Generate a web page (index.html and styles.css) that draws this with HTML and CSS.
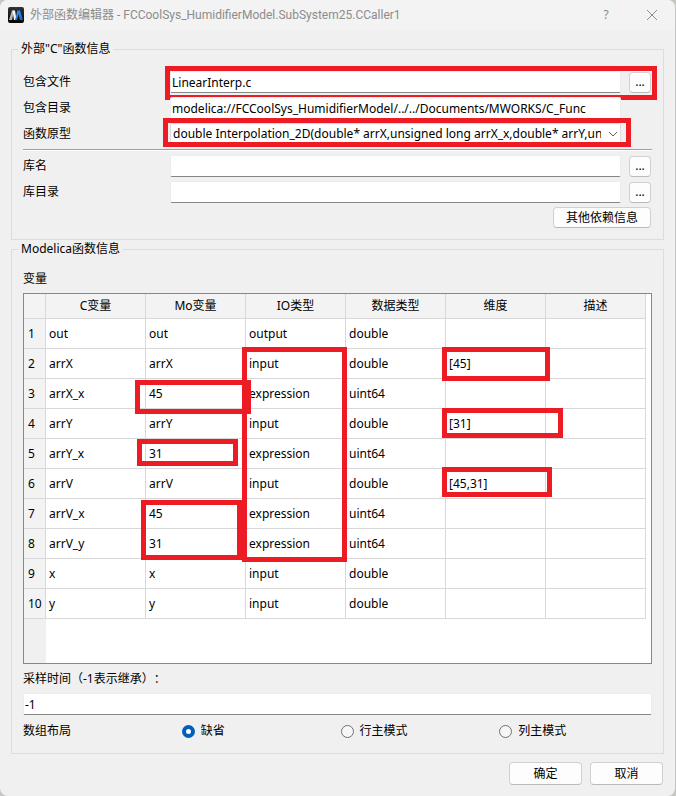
FILE: index.html
```html
<!DOCTYPE html>
<html lang="zh-CN">
<head>
<meta charset="utf-8">
<meta name="viewport" content="width=device-width, initial-scale=1">
<title>外部函数编辑器</title>
<link rel="stylesheet" href="styles.css">
</head>
<body>
<div class="window">
  <header class="titlebar">
    <svg class="logo" viewBox="0 0 16 16" aria-hidden="true">
      <defs>
        <linearGradient id="logo-bg" x1="0" y1="0" x2="0" y2="1"><stop offset="0" stop-color="#333"/><stop offset="1" stop-color="#050505"/></linearGradient>
        <linearGradient id="logo-blue" x1="0" y1="0" x2="1" y2="1"><stop offset="0" stop-color="#3aa0ff"/><stop offset="1" stop-color="#0b62c4"/></linearGradient>
      </defs>
      <rect width="16" height="16" rx="2" fill="url(#logo-bg)"/>
      <path d="M1 13 4 3.500h2L4 13z" fill="#b4b8be"/>
      <path d="M4.500 3.500H7L8.500 13H6z" fill="#f4f6f8"/>
      <path d="M7 13 9.500 3.500H12L15 13h-3L10.500 7 9 13z" fill="url(#logo-blue)"/>
    </svg>
    <h1 class="title">外部函数编辑器 - FCCoolSys_HumidifierModel.SubSystem25.CCaller1</h1>
    <button class="caption-button" type="button" aria-label="帮助">?</button>
    <button class="caption-button" type="button" aria-label="关闭"><svg class="close-icon" viewBox="0 0 12 12" aria-hidden="true"><path d="M1 1l10 10M11 1L1 11"/></svg></button>
  </header>

  <form class="content">
    <fieldset class="group">
      <legend>外部"C"函数信息</legend>
      <div class="fields">
        <div class="field">
          <label for="file">包含文件</label>
          <input id="file" class="textbox" type="text" value="LinearInterp.c">
          <button class="button browse" type="button" aria-label="浏览包含文件">...</button>
          <span class="mark mark-file"></span>
        </div>
        <div class="field">
          <label for="dir">包含目录</label>
          <input id="dir" class="textbox" type="text" value="modelica://FCCoolSys_HumidifierModel/../../Documents/MWORKS/C_Func">
        </div>
        <div class="field">
          <label for="proto">函数原型</label>
          <div class="combo">
            <select id="proto"><option>double Interpolation_2D(double* arrX,unsigned long arrX_x,double* arrY,unsigned long arrY_x,double* arrV,unsigned long arrV_x,unsigned long arrV_y,double x,double y)</option></select>
            <svg class="chevron" viewBox="0 0 10 6" aria-hidden="true"><path d="M1 1l4 4 4-4"/></svg>
            <span class="mark mark-proto"></span>
          </div>
        </div>
        <hr class="separator">
        <div class="field">
          <label for="lib">库名</label>
          <input id="lib" class="textbox" type="text">
          <button class="button browse" type="button" aria-label="浏览库名">...</button>
        </div>
        <div class="field">
          <label for="libdir">库目录</label>
          <input id="libdir" class="textbox" type="text">
          <button class="button browse" type="button" aria-label="浏览库目录">...</button>
        </div>
        <button class="button deps" type="button">其他依赖信息</button>
      </div>
    </fieldset>

    <fieldset class="group group-model">
      <legend>Modelica函数信息</legend>
      <div class="line" id="vars">变量</div>
      <div class="sheet">
        <table aria-labelledby="vars">
          <thead>
            <tr><td class="corner"></td><th scope="col">C变量</th><th scope="col">Mo变量</th><th scope="col">IO类型</th><th scope="col">数据类型</th><th scope="col">维度</th><th scope="col">描述</th></tr>
          </thead>
          <tbody>
            <tr><th scope="row">1</th><td>out</td><td>out</td><td>output</td><td>double</td><td></td><td></td></tr>
            <tr><th scope="row">2</th><td>arrX</td><td>arrX</td><td>input</td><td>double</td><td>[45]</td><td></td></tr>
            <tr><th scope="row">3</th><td>arrX_x</td><td>45</td><td>expression</td><td>uint64</td><td></td><td></td></tr>
            <tr><th scope="row">4</th><td>arrY</td><td>arrY</td><td>input</td><td>double</td><td>[31]</td><td></td></tr>
            <tr><th scope="row">5</th><td>arrY_x</td><td>31</td><td>expression</td><td>uint64</td><td></td><td></td></tr>
            <tr><th scope="row">6</th><td>arrV</td><td>arrV</td><td>input</td><td>double</td><td>[45,31]</td><td></td></tr>
            <tr><th scope="row">7</th><td>arrV_x</td><td>45</td><td>expression</td><td>uint64</td><td></td><td></td></tr>
            <tr><th scope="row">8</th><td>arrV_y</td><td>31</td><td>expression</td><td>uint64</td><td></td><td></td></tr>
            <tr><th scope="row">9</th><td>x</td><td>x</td><td>input</td><td>double</td><td></td><td></td></tr>
            <tr><th scope="row">10</th><td>y</td><td>y</td><td>input</td><td>double</td><td></td><td></td></tr>
          </tbody>
        </table>
        <span class="mark mark-arrx"></span>
        <span class="mark mark-arry"></span>
        <span class="mark mark-arrv"></span>
        <span class="mark mark-io"></span>
        <span class="mark mark-dim-x"></span>
        <span class="mark mark-dim-y"></span>
        <span class="mark mark-dim-v"></span>
      </div>
      <label class="line" for="sample">采样时间（-1表示继承）：</label>
      <input id="sample" class="textbox" type="text" value="-1">
      <div class="layout" role="radiogroup" aria-labelledby="layout-label">
        <span id="layout-label">数组布局</span>
        <label><input type="radio" name="layout" checked>缺省</label>
        <label><input type="radio" name="layout">行主模式</label>
        <label><input type="radio" name="layout">列主模式</label>
      </div>
    </fieldset>

    <div class="actions">
      <button class="button" type="button">确定</button>
      <button class="button" type="button">取消</button>
    </div>
  </form>
</div>
</body>
</html>
```
FILE: styles.css
```css
* {
  box-sizing: border-box;
}

body {
  margin: 0;
  background: #c6c6c2;
  color: #000;
  font: 12px/16px "Noto Sans", "Noto Sans CJK SC", sans-serif;
  text-spacing-trim: space-all;
}

button,
input,
select {
  margin: 0;
  color: inherit;
  font: inherit;
}

.window {
  display: flex;
  flex-direction: column;
  min-height: 100vh;
  border-right: 1px solid #c4c4c4;
  border-radius: 8px;
  background: #f0f0f0;
}

/* Title bar */
.titlebar {
  display: flex;
  align-items: center;
  height: 30px;
  padding-left: 8px;
  border-radius: 8px 8px 0 0;
  background: #f3f3f3;
  color: #8c8c8c;
}

.logo {
  width: 16px;
  height: 16px;
  margin-right: 6px;
}

.title {
  flex: 1;
  margin: 0;
  font: 12px/16px Roboto, "Noto Sans CJK SC", sans-serif;
  white-space: nowrap;
}

.caption-button {
  display: flex;
  align-items: center;
  justify-content: center;
  width: 46px;
  height: 30px;
  padding: 0;
  border: 0;
  background: none;
}

.close-icon {
  width: 12px;
  height: 12px;
  fill: none;
  stroke: #8c8c8c;
}

/* Groups */
.content {
  display: flex;
  flex: 1;
  flex-direction: column;
  padding: 11px;
}

.group {
  min-width: 0;
  margin: 0 0 1px;
  padding: 14px 11px 11px;
  border: 1px solid #dcdcdc;
}

.group legend {
  margin-left: -5px;
  padding: 0 3px;
}

.fields {
  display: flex;
  flex-direction: column;
  gap: 4px;
}

.field {
  position: relative;
  display: grid;
  grid-template-columns: 147px 1fr 31px;
  align-items: center;
  height: 22px;
}

.textbox {
  width: 100%;
  height: 22px;
  padding: 0 1px;
  border: 1px solid #ececec;
  border-bottom-color: #868686;
  border-radius: 2px;
  outline: 0;
  background: #fff;
}

.combo {
  position: relative;
}

.combo select {
  display: block;
  width: 100%;
  height: 22px;
  padding: 0 19px 0 2px;
  border: 1px solid #dcdcdc;
  border-radius: 2px;
  appearance: none;
  background: #fff;
}

.chevron {
  position: absolute;
  top: 8px;
  right: 3px;
  width: 10px;
  height: 6px;
  fill: none;
  stroke: #606060;
  pointer-events: none;
}

.separator {
  width: 100%;
  height: 2px;
  margin: 0;
  border: 0;
  border-top: 1px solid #a0a0a0;
  background: #fff;
}

.button {
  height: 23px;
  padding: 0;
  border: 1px solid #d0d0d0;
  border-bottom-color: #bababa;
  border-radius: 4px;
  background: #fdfdfd;
}

.browse {
  width: 22px;
  height: 21px;
  margin-left: 8px;
}

.deps {
  align-self: flex-end;
  width: 98px;
  height: 21px;
  margin-right: 1px;
}

/* Variable table */
.group-model {
  flex: 1;
  margin-bottom: 8px;
  padding-bottom: 13px;
}

.line {
  display: block;
  margin-bottom: 6px;
}

.sheet {
  position: relative;
  min-height: 371px;
  margin-bottom: 7px;
  border: 1px solid #828790;
  background: linear-gradient(to right, #f0f0f0 22px, #fff 22px);
}

table {
  width: 622px;
  border-collapse: separate;
  border-spacing: 0;
  table-layout: fixed;
}

th,
td {
  height: 30px;
  padding: 0 3px;
  border-right: 1px solid #d8d8d8;
  border-bottom: 1px solid #d8d8d8;
  background: #fff;
  font-weight: 400;
  text-align: left;
}

thead th,
thead td {
  height: 25px;
  background: #f3f3f3;
  text-align: center;
}

.corner {
  width: 22px;
}

tbody th {
  padding: 0 0 0 4px;
  background: #f3f3f3;
}

/* Array layout */
.layout {
  display: grid;
  grid-template-columns: repeat(4, 1fr);
  column-gap: 6px;
  margin-top: 8px;
}

.layout label {
  display: flex;
  align-items: center;
  gap: 6px;
}

.layout input {
  width: 13px;
  height: 13px;
  border: 1px solid #707070;
  border-radius: 50%;
  appearance: none;
  background: #f6f6f6;
}

.layout input:checked {
  border: 4px solid #005fb8;
  background: #fff;
}

.actions {
  display: flex;
  justify-content: flex-end;
  gap: 8px;
  padding-right: 1px;
}

.actions .button {
  width: 73px;
}

/* Highlight frames */
.mark {
  position: absolute;
  border: 5px solid #ed1c24;
  pointer-events: none;
}

.mark-file {
  inset: -5px -5px -7px 142px;
}

.mark-proto {
  inset: -5px -10px -2px -7px;
}

.mark-arrx {
  top: 86px;
  left: 111px;
  width: 116px;
  height: 34px;
}

.mark-arry {
  top: 145px;
  left: 113px;
  width: 101px;
  height: 27px;
}

.mark-arrv {
  top: 206px;
  left: 117px;
  width: 101px;
  height: 60px;
}

.mark-io {
  top: 53px;
  left: 218px;
  width: 105px;
  height: 215px;
}

.mark-dim-x {
  top: 53px;
  left: 418px;
  width: 108px;
  height: 34px;
}

.mark-dim-y {
  top: 114px;
  left: 418px;
  width: 121px;
  height: 30px;
}

.mark-dim-v {
  top: 173px;
  left: 418px;
  width: 110px;
  height: 30px;
}
```
